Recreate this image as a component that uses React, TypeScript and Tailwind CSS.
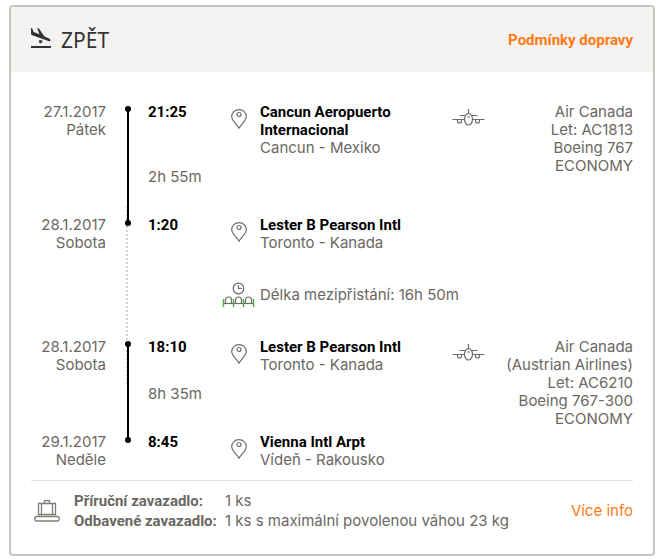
import React from 'react';

interface Stop {
  date: string;
  day: string;
  time: string;
  airport: string;
  city: string;
}

interface Leg {
  departure: Stop;
  arrival: Stop;
  duration: string;
  carrier: string[];
}

const firstLeg: Leg = {
  departure: { date: '27.1.2017', day: 'Pátek', time: '21:25', airport: 'Cancun Aeropuerto Internacional', city: 'Cancun - Mexiko' },
  arrival: { date: '28.1.2017', day: 'Sobota', time: '1:20', airport: 'Lester B Pearson Intl', city: 'Toronto - Kanada' },
  duration: '2h 55m',
  carrier: ['Air Canada', 'Let: AC1813', 'Boeing 767', 'ECONOMY']
};

const secondLeg: Leg = {
  departure: { date: '28.1.2017', day: 'Sobota', time: '18:10', airport: 'Lester B Pearson Intl', city: 'Toronto - Kanada' },
  arrival: { date: '29.1.2017', day: 'Neděle', time: '8:45', airport: 'Vienna Intl Arpt', city: 'Vídeň - Rakousko' },
  duration: '8h 35m',
  carrier: ['Air Canada', '(Austrian Airlines)', 'Let: AC6210', 'Boeing 767-300', 'ECONOMY']
};

const LandingIcon = () => (
  <svg width="20" height="24" viewBox="0 0 20 24" fill="#333" aria-hidden="true">
    <path d="M0 0l1.300.4 1.400 3.600 5.800 2.200L6 0l2.200.7 5 7.600 5.300 2.400c1.600.9 1.400 2.800-.5 2.500L1.200 7.200 0 6z" />
    <path d="M8 12.300h3l.5 1-1.500 2.200-1.800-.7z" />
    <path d="M0 18h20v2H0z" />
  </svg>
);

const PinIcon = () => (
  <svg width="16" height="20" viewBox="0 0 16 20" fill="none" stroke="#706c68" strokeWidth="1.2" aria-hidden="true">
    <path d="M8 19.100C6.200 15.800.7 11.800.7 7.500a7.300 6.900 0 0 1 14.600 0c0 4.300-5.500 8.300-7.300 11.600z" />
    <circle cx="8" cy="5.500" r="2" />
  </svg>
);

const PlaneIcon = () => (
  <svg width="33" height="17" viewBox="0 0 33 17" fill="none" stroke="#706c68" strokeWidth="1.2" aria-hidden="true">
    <path d="M16.500 0v4.500M7.500 6.500H13M20 6.500h5.500M0.500 10.500h12M20.500 10.500h12M15 8h3" />
    <ellipse cx="16.500" cy="10.300" rx="4" ry="5.700" />
    <path d="M5.500 10.500v1.500a2 2 0 0 0 4 0v-1.500M23.500 10.500v1.500a2 2 0 0 0 4 0v-1.500" />
  </svg>
);

const WaitingIcon = () => (
  <svg width="33" height="26" viewBox="0 0 33 26" fill="none" stroke="#706c68" strokeWidth="1.2" aria-hidden="true">
    <circle cx="16.500" cy="6.500" r="5.300" />
    <path d="M16.500 3V6.500H20" />
    <path d="M3.500 22v-4a3 3 0 0 1 6 0V22M13.500 22v-4a3 3 0 0 1 6 0V22M23.500 22v-4a3 3 0 0 1 6 0V22" />
    <path d="M1.500 21.500h30" />
    <path d="M1.500 17v8M11.500 17v8M21.500 17v8M31.500 17v8" stroke="#3fae4c" strokeWidth="1.400" />
  </svg>
);

const LuggageIcon = () => (
  <svg width="26" height="22" viewBox="0 0 26 22" fill="none" stroke="#827e79" strokeWidth="1.3" aria-hidden="true">
    <path d="M10.500 3.500v-3h5v3M4.500 15.500v-12h17v12M7.500 4v11.500M18.500 4v11.500M4 14.500h18" />
    <rect x="0.700" y="16.500" width="24.600" height="4.500" rx="2.250" />
  </svg>
);

const StopCells: React.FC<{ stop: Stop; row: string }> = ({ stop, row }) => {
  return (
    <>
      <div className={`col-start-1 text-right ${row}`}>
        <p>{stop.date}</p>
        <p>{stop.day}</p>
      </div>
      <p className={`col-start-3 font-['Roboto',sans-serif] font-bold text-black ${row}`}>{stop.time}</p>
      <div className={`col-start-4 pt-1.5 pl-[9px] ${row}`}>
        <PinIcon />
      </div>
      <div className={`col-start-5 ${row}`}>
        <h3 className="font-['Roboto',sans-serif] font-bold text-black">{stop.airport}</h3>
        <p>{stop.city}</p>
      </div>
    </>
  );
};

const FlightLeg: React.FC<{ leg: Leg }> = ({ leg }) => {
  return (
    <section className="grid grid-cols-[75px_42px_74px_38px_minmax(0,13fr)_33px_minmax(0,10fr)]">
      <StopCells stop={leg.departure} row="row-start-1" />
      <div className="col-start-2 row-start-1 row-span-3 pt-1.5 pb-[29px] pl-[21px]">
        <div className="relative z-10 h-full w-0.5 bg-black">
          <span className="absolute -top-[3px] -left-0.5 size-1.5 rounded-full bg-black" />
          <span className="absolute -bottom-[3px] -left-0.5 size-1.5 rounded-full bg-black" />
        </div>
      </div>
      <div className="col-start-6 row-start-1 pt-1.5">
        <PlaneIcon />
      </div>
      <div className="col-start-7 row-start-1 row-span-2 text-right">
        {leg.carrier.map((line) => (
          <p key={line}>{line}</p>
        ))}
      </div>
      <p className="col-start-3 row-start-2 pt-[11px] pb-[30px]">{leg.duration}</p>
      <StopCells stop={leg.arrival} row="row-start-3" />
    </section>
  );
};

export default function App() {
  return (
    <main className="bg-white pt-[5px] pr-[7px] pb-1 pl-[9px] font-['Inter',sans-serif] text-[15px] leading-[18px] text-[#6b6762]">
      <article className="rounded border-2 border-[#c8c4be] bg-white">
        <header className="flex h-[65px] items-center justify-between bg-[#f4f3f1] px-5">
          <h2 className="flex items-center gap-2.5 font-['Noto_Sans',sans-serif] text-[21px] text-[#333]">
            <LandingIcon />
            ZPĚT
          </h2>
          <a href="#podminky" className="font-['Roboto',sans-serif] font-bold text-[#ff7a14]">
            Podmínky dopravy
          </a>
        </header>

        <div className="px-5 pt-[31px]">
          <FlightLeg leg={firstLeg} />
          <div className="relative flex h-[86px] items-center pl-[191px]">
            <span className="absolute -top-[46px] -bottom-[46px] left-[95px] border-l-2 border-dotted border-[#d2cfca]" />
            <div className="w-[38px]">
              <WaitingIcon />
            </div>
            <p>Délka mezipřistání: 16h 50m</p>
          </div>
          <FlightLeg leg={secondLeg} />

          <footer className="mt-[11px] flex items-center border-t border-[#dedede] pt-2.5 pb-[23px] leading-5">
            <div className="w-[43px] pl-[3px]">
              <LuggageIcon />
            </div>
            <dl className="grid grid-cols-[151px_auto]">
              <dt className="font-['Roboto',sans-serif] font-bold whitespace-nowrap">Příruční zavazadlo:</dt>
              <dd>1 ks</dd>
              <dt className="font-['Roboto',sans-serif] font-bold whitespace-nowrap">Odbavené zavazadlo:</dt>
              <dd>1 ks s maximální povolenou váhou 23 kg</dd>
            </dl>
            <a href="#info" className="ml-auto text-[#ff7a14]">
              Více info
            </a>
          </footer>
        </div>
      </article>
    </main>
  );
}
